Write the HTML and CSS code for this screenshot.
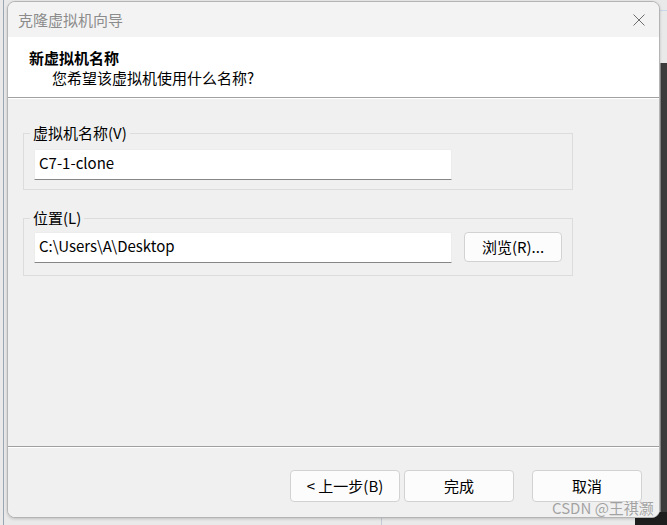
FILE: index.html
```html
<!DOCTYPE html>
<html lang="zh-CN">
<head>
<meta charset="utf-8">
<title>克隆虚拟机向导</title>
<link rel="stylesheet" href="styles.css">
</head>
<body>
<div class="desktop">
  <div class="bg-left-line"></div>
  <div class="bg-top-line"></div>
  <div class="bg-dark-right"></div>
  <div class="bg-dark-bottom"></div>
  <div class="bg-bottom-line"></div>

  <div class="dialog">
    <div class="titlebar">
      <span class="title">克隆虚拟机向导</span>
      <svg class="close" width="12" height="12" viewBox="0 0 12 12" aria-hidden="true">
        <path d="M0.5 0.5 L11.5 11.5 M11.5 0.5 L0.5 11.5" stroke="#6e6e6e" stroke-width="1" fill="none"/>
      </svg>
    </div>

    <div class="header">
      <div class="h-title">新虚拟机名称</div>
      <div class="h-sub">您希望该虚拟机使用什么名称?</div>
    </div>

    <div class="content">
      <fieldset class="group g1">
        <legend>虚拟机名称(V)</legend>
        <div class="row">
          <div class="input">C7-1-clone</div>
        </div>
      </fieldset>

      <fieldset class="group g2">
        <legend>位置(L)</legend>
        <div class="row">
          <div class="input">C:\Users\A\Desktop</div>
          <button class="btn browse">浏览(R)...</button>
        </div>
      </fieldset>
    </div>

    <div class="footer">
      <button class="btn nav back">&lt;&nbsp;上一步(B)</button>
      <button class="btn nav finish">完成</button>
      <button class="btn nav cancel">取消</button>
    </div>
  </div>

  <div class="watermark">CSDN @王祺灏</div>
</div>
</body>
</html>
```

FILE: styles.css
```css
* {
  box-sizing: border-box;
}

html, body {
  margin: 0;
  padding: 0;
}

body {
  font-family: "Noto Sans CJK SC", "Noto Sans", sans-serif;
  font-size: 15px;
  color: #000;
}

.desktop {
  position: relative;
  width: 667px;
  height: 525px;
  overflow: hidden;
  background: #e9e9e9;
}

.bg-left-line {
  position: absolute;
  left: 3px;
  top: 0;
  bottom: 0;
  width: 1px;
  background: #9aa4b4;
}

.bg-top-line {
  position: absolute;
  left: 650px;
  right: 0;
  top: 10px;
  height: 1px;
  background: #c9d7ea;
}

.bg-dark-right {
  position: absolute;
  left: 660px;
  right: 0;
  top: 63px;
  bottom: 0;
  background: #3c3c3c;
  border-left: 1px solid #8a8a8a;
}

.bg-dark-bottom {
  position: absolute;
  left: 635px;
  right: 0;
  top: 512px;
  bottom: 0;
  background: #1e1e1e;
}

.bg-bottom-line {
  position: absolute;
  left: 381px;
  top: 510px;
  bottom: 0;
  width: 1px;
  background: #c4cad4;
}

.dialog {
  position: absolute;
  left: 7px;
  top: 1px;
  width: 653px;
  height: 517px;
  display: flex;
  flex-direction: column;
  background: #f0f0f0;
  border: 1px solid #b4b4b4;
  border-radius: 8px;
  overflow: hidden;
  box-shadow: 0 1px 3px rgba(0, 0, 0, 0.18);
}

.titlebar {
  height: 35px;
  flex: none;
  display: flex;
  align-items: center;
  justify-content: space-between;
  padding: 0 14px 0 10px;
  background: #f3f3f3;
}

.title {
  color: #8c8c8c;
  line-height: 20px;
}

.close {
  display: block;
}

.header {
  flex: none;
  background: #ffffff;
  padding: 11px 0 9px 21px;
  border-bottom: 1px solid #a0a0a0;
  box-shadow: 0 1px 0 #ffffff;
  line-height: 20px;
}

.h-title {
  font-weight: bold;
}

.h-sub {
  padding-left: 23px;
}

.content {
  flex: 1;
  margin-top: 1px;
  padding: 24px 0 0 15px;
  background: #f0f0f0;
  border-bottom: 1px solid #a0a0a0;
  box-shadow: 0 1px 0 #ffffff;
}

.group {
  margin: 0;
  padding: 0;
  width: 550px;
  border: 1px solid #dcdcdc;
  min-inline-size: 0;
}

.group legend {
  margin-left: 6px;
  padding: 0 3px;
  line-height: 20px;
}

.g1 .row {
  padding: 6px 0 9px 10px;
}

.g2 {
  margin-top: 18px;
}

.g2 .row {
  padding: 4px 0 12px 10px;
}

.row {
  display: flex;
  align-items: flex-start;
}

.input {
  width: 418px;
  height: 31px;
  display: flex;
  align-items: center;
  padding: 0 0 3px 4px;
  background: #ffffff;
  border: 1px solid #ececec;
  border-bottom: 1px solid #868686;
  border-radius: 2px 2px 0 0;
  line-height: 20px;
}

.btn {
  font: inherit;
  color: #000;
  background: #fcfcfc;
  border: 1px solid #d2d2d2;
  border-radius: 4px;
  padding: 0;
  line-height: 20px;
}

.browse {
  width: 98px;
  height: 30px;
  margin-left: 12px;
}

.footer {
  flex: none;
  height: 69px;
  margin-top: 1px;
  display: flex;
  justify-content: flex-end;
  align-items: flex-start;
  padding: 22px 17px 0 0;
  background: #f0f0f0;
}

.nav {
  width: 110px;
  height: 32px;
}

.finish {
  margin-left: 4px;
}

.cancel {
  margin-left: 18px;
}

.watermark {
  position: absolute;
  left: 552px;
  top: 499px;
  color: rgba(110, 110, 110, 0.6);
  font-size: 15px;
  line-height: 18px;
  white-space: nowrap;
}
```
